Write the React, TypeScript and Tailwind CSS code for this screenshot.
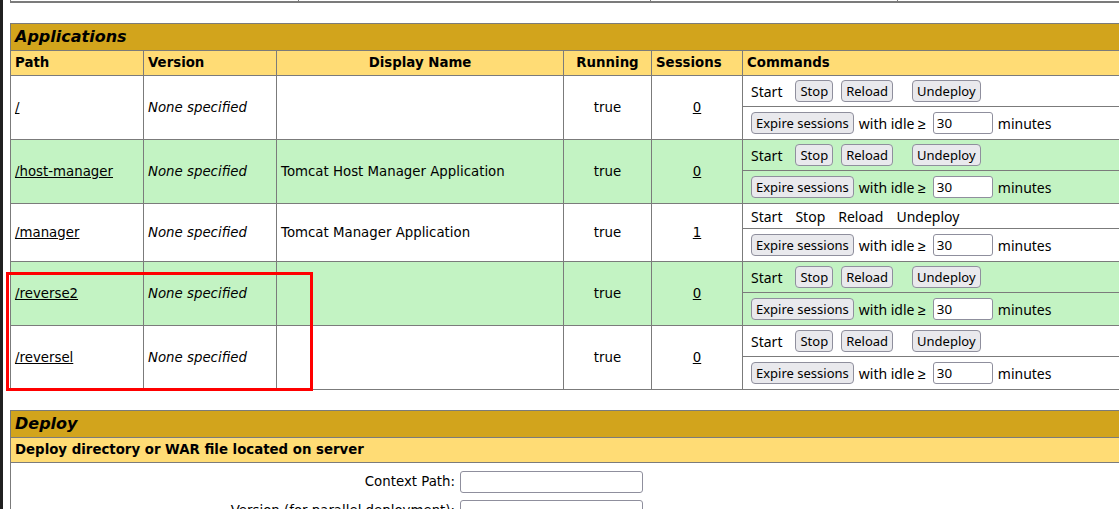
import React from 'react';

type AppRow = {
  path: string;
  display: string;
  sessions: string;
  green: boolean;
  manager?: boolean;
};

const apps: AppRow[] = [
  { path: '/', display: '', sessions: '0', green: false },
  { path: '/host-manager', display: 'Tomcat Host Manager Application', sessions: '0', green: true },
  { path: '/manager', display: 'Tomcat Manager Application', sessions: '1', green: false, manager: true },
  { path: '/reverse2', display: '', sessions: '0', green: true },
  { path: '/reversel', display: '', sessions: '0', green: false },
];

const cell = 'border border-[#7b7b7b] px-[4px] py-0 align-middle';

const Btn = ({ children }: { children: React.ReactNode }) => (
  <button className="h-[22px] px-[4px] rounded-[4px] border border-[#8f8f9d] bg-[#e9e9ed] text-[13px] leading-none text-black font-['Noto_Sans',sans-serif]">
    {children}
  </button>
);

const Field = ({ value, width }: { value?: string; width: string }) => (
  <input
    readOnly
    defaultValue={value}
    className={`h-[22px] ${width} border border-[#8f8f9d] rounded-[3px] bg-white pl-[3px] text-[13.33px] text-black font-['Noto_Sans',sans-serif] outline-none`}
  />
);

const App: React.FC = () => {
  return (
    <div className="relative flex w-[1119px] h-[509px] overflow-hidden bg-white text-black font-['DejaVu_Sans',sans-serif] text-[13.33px]">
      {/* dark edge of the window */}
      <div className="w-[3px] shrink-0 bg-[#202020]" />

      <div className="flex-1 pl-[7px] overflow-hidden">
        {/* bottom of the previous table */}
        <div className="flex w-[1150px] h-[3px] border-b-2 border-[#7b7b7b]">
          <div className="w-[288px] border-l border-[#7b7b7b]" />
          <div className="w-[352px] border-l border-[#7b7b7b]" />
          <div className="w-[247px] border-l border-[#7b7b7b]" />
          <div className="flex-1 border-l border-[#7b7b7b]" />
        </div>

        {/* Applications */}
        <table className="mt-[20px] w-[1150px] table-fixed border-collapse border border-[#7b7b7b]">
          <colgroup>
            <col className="w-[133px]" />
            <col className="w-[133px]" />
            <col className="w-[287px]" />
            <col className="w-[88px]" />
            <col className="w-[91px]" />
            <col className="w-[418px]" />
          </colgroup>
          <tbody>
            <tr className="bg-[#d2a41c]">
              <td colSpan={6} className="border border-[#7b7b7b] p-0">
                <div className="h-[26px] flex items-center pl-[4px] text-[16px] font-bold italic">Applications</div>
              </td>
            </tr>
            <tr className="bg-[#ffdc75] font-bold">
              <td className={cell}><div className="h-[24px] flex items-center">Path</div></td>
              <td className={cell}><div className="h-[24px] flex items-center">Version</div></td>
              <td className={cell}><div className="h-[24px] flex items-center justify-center">Display Name</div></td>
              <td className={cell}><div className="h-[24px] flex items-center justify-center">Running</div></td>
              <td className={cell}><div className="h-[24px] flex items-center">Sessions</div></td>
              <td className={cell}><div className="h-[24px] flex items-center">Commands</div></td>
            </tr>
            {apps.map((a) => {
              const bg = a.green ? 'bg-[#c3f3c3]' : 'bg-white';
              return (
                <React.Fragment key={a.path}>
                  <tr className={bg}>
                    <td rowSpan={2} className={cell}>
                      <a className="underline">{a.path}</a>
                    </td>
                    <td rowSpan={2} className={cell + ' italic'}>None specified</td>
                    <td rowSpan={2} className={cell}>{a.display}</td>
                    <td rowSpan={2} className={cell + ' text-center'}>true</td>
                    <td rowSpan={2} className={cell + ' text-center'}>
                      <a className="underline">{a.sessions}</a>
                    </td>
                    <td className="border border-[#7b7b7b] p-0">
                      {a.manager ? (
                        <div className="h-[24px] flex items-center gap-[13px] pl-[8px] text-[14px] font-['Noto_Sans',sans-serif]">
                          <span>Start</span>
                          <span>Stop</span>
                          <span>Reload</span>
                          <span>Undeploy</span>
                        </div>
                      ) : (
                        <div className="h-[30px] flex items-center pl-[8px] text-[14px] font-['Noto_Sans',sans-serif]">
                          <span>Start</span>
                          <span className="ml-[13px]"><Btn>Stop</Btn></span>
                          <span className="ml-[8px]"><Btn>Reload</Btn></span>
                          <span className="ml-[19px]"><Btn>Undeploy</Btn></span>
                        </div>
                      )}
                    </td>
                  </tr>
                  <tr className={bg}>
                    <td className="border border-[#7b7b7b] p-0">
                      <div className="h-[32px] flex items-center pl-[8px] text-[14px] font-['Noto_Sans',sans-serif]">
                        <Btn>Expire sessions</Btn>
                        <span className="ml-[5px]">with idle ≥</span>
                        <span className="ml-[7px] flex"><Field value="30" width="w-[60px]" /></span>
                        <span className="ml-[5px]">minutes</span>
                      </div>
                    </td>
                  </tr>
                </React.Fragment>
              );
            })}
          </tbody>
        </table>

        {/* Deploy */}
        <table className="mt-[20px] w-[1150px] table-fixed border-collapse border border-[#7b7b7b]">
          <tbody>
            <tr className="bg-[#d2a41c]">
              <td className="border border-[#7b7b7b] p-0">
                <div className="h-[26px] flex items-center pl-[4px] text-[16px] font-bold italic">Deploy</div>
              </td>
            </tr>
            <tr className="bg-[#ffdc75]">
              <td className="border border-[#7b7b7b] p-0">
                <div className="h-[24px] flex items-center pl-[4px] font-bold">Deploy directory or WAR file located on server</div>
              </td>
            </tr>
            <tr>
              <td className="border border-[#7b7b7b] p-0">
                <div className="grid grid-cols-[444px_183px] gap-x-[5px] gap-y-[7px] items-center pt-[8px] pb-[8px]">
                  <span className="text-right">Context Path:</span>
                  <Field width="w-[183px]" />
                  <span className="text-right">Version (for parallel deployment):</span>
                  <Field width="w-[183px]" />
                  <span className="text-right">XML Configuration file path:</span>
                  <Field width="w-[183px]" />
                </div>
              </td>
            </tr>
          </tbody>
        </table>
      </div>

      {/* red annotation box */}
      <div className="absolute left-[6px] top-[272px] w-[307px] h-[119px] border-[3px] border-[#ff0000]" />
    </div>
  );
};

export default App;
